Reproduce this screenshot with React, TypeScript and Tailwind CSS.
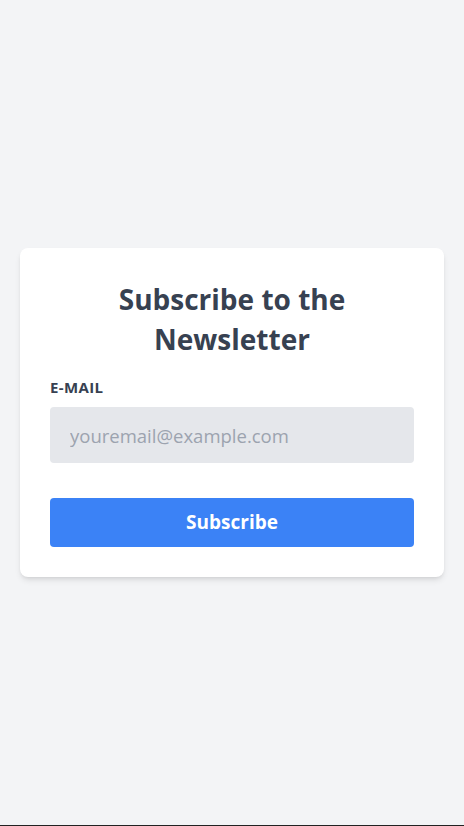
import React from "react";

export default function App() {
  return (
    <div
      className="h-[826px] flex flex-col bg-[#f3f4f6]"
      style={{ fontFamily: '"Open Sans", "Noto Sans", sans-serif' }}
    >
      <div className="flex-1 flex items-center justify-center px-5">
        <div className="w-full bg-white rounded-lg shadow-md px-[30px] pt-[31px] pb-[30px]">
          <h1 className="text-center text-[28px] leading-[40px] font-bold text-[#374151] px-10">
            Subscribe to the Newsletter
          </h1>
          <form className="mt-[18px]" onSubmit={(e) => e.preventDefault()}>
            <label className="block text-[15px] leading-5 font-bold text-[#374151] uppercase tracking-wide mb-[10px]">
              E-mail
            </label>
            <input
              type="email"
              placeholder="youremail@example.com"
              className="block w-full h-14 bg-[#e5e7eb] rounded px-5 text-[18.5px] text-[#374151] placeholder-[#9ca3af] outline-none"
            />
            <button
              type="submit"
              className="mt-[35px] w-full h-[49px] bg-[#3b82f6] rounded text-white font-bold text-[19px]"
            >
              Subscribe
            </button>
          </form>
        </div>
      </div>
      <div className="h-px bg-[#222]" />
    </div>
  );
}
